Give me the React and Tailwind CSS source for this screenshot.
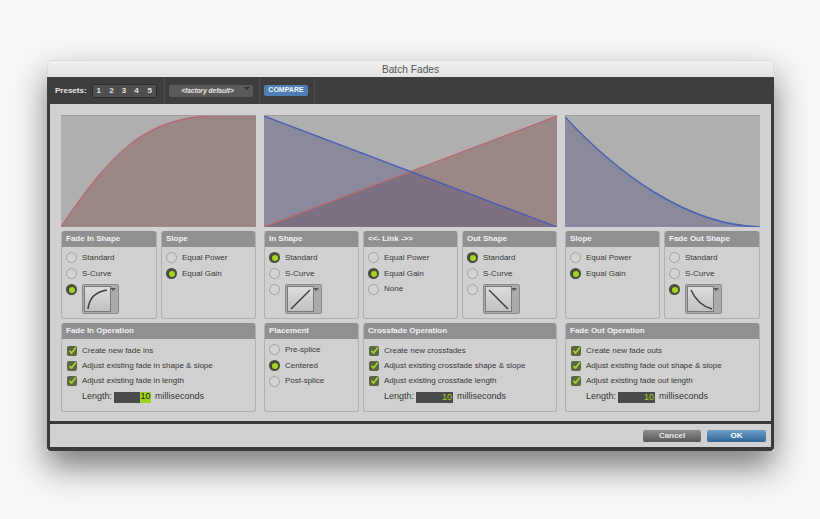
import React from 'react';

const font = { fontFamily: '"Liberation Sans", Arial, sans-serif' };

function Radio({ on }) {
  if (on) {
    return (
      <span className="flex h-[11px] w-[11px] shrink-0 items-center justify-center rounded-full bg-[#484c3e]">
        <span className="h-[6px] w-[6px] rounded-full bg-[#a6d41e]" />
      </span>
    );
  }
  return <span className="h-[11px] w-[11px] shrink-0 rounded-full border border-[#a2a2a2] bg-[#d4d4d4]" />;
}

function RadioRow({ label, on }) {
  return (
    <div className="flex h-[15.75px] items-center gap-[5px] text-[8px] text-[#383838]">
      <Radio on={on} />
      <span>{label}</span>
    </div>
  );
}

function Check({ label }) {
  return (
    <div className="flex h-[15px] items-center gap-[5px] text-[8px] text-[#383838]">
      <span className="flex h-[10px] w-[10px] shrink-0 items-center justify-center rounded-[2px] bg-[#5d6642]">
        <svg width="9" height="9" viewBox="0 0 9 9" fill="none">
          <path d="M1.5 4.8 L3.6 7 L7.8 1.6" stroke="#a9d82a" strokeWidth="1.7" />
        </svg>
      </span>
      <span>{label}</span>
    </div>
  );
}

function Panel({ title, className, children }) {
  return (
    <div className={`flex flex-col overflow-hidden rounded-[3px] border border-t-0 border-[#b0b0b0] bg-[#d0d0d0] ${className}`}>
      <div className="-mx-px flex h-[16px] shrink-0 items-center bg-[#909090] px-[5px] text-[8px] font-bold text-[#f2f2f2]">
        {title}
      </div>
      {children}
    </div>
  );
}

function CurveButton({ d }) {
  return (
    <div className="relative ml-[5px] h-[30px] w-[37px] shrink-0 rounded-[2px] border border-[#8a8a8a] bg-[#ababab]">
      <div className="ml-px mt-px h-[26px] w-[27px] border border-[#7a7a7a] bg-gradient-to-b from-[#dcdcdc] to-[#c2c2c2]">
        <svg width="25" height="24" viewBox="0 0 25 24" fill="none">
          <path d={d} stroke="#3f3f3f" strokeWidth="1.5" />
        </svg>
      </div>
      <span className="absolute right-[2px] top-[3px] h-0 w-0 border-x-[3px] border-t-[3px] border-x-transparent border-t-[#555555]" />
    </div>
  );
}

function ShapePanel({ title, selected, d, className }) {
  return (
    <Panel title={title} className={className}>
      <div className="px-[4px] pt-[3px]">
        <RadioRow label="Standard" on={selected === 'standard'} />
        <RadioRow label="S-Curve" on={selected === 'scurve'} />
        <div className="flex items-start pt-[2.5px]">
          <Radio on={selected === 'custom'} />
          <CurveButton d={d} />
        </div>
      </div>
    </Panel>
  );
}

function OptionsPanel({ title, options, selected, className }) {
  return (
    <Panel title={title} className={className}>
      <div className="px-[4px] pt-[3px]">
        {options.map((o) => (
          <RadioRow key={o} label={o} on={o === selected} />
        ))}
      </div>
    </Panel>
  );
}

function OperationPanel({ title, lines, boxed, className }) {
  return (
    <Panel title={title} className={className}>
      <div className="pl-[5px] pt-[4px]">
        {lines.map((l) => (
          <Check key={l} label={l} />
        ))}
        <div className="mt-[2px] flex h-[14px] items-center pl-[15px] text-[9px] text-[#383838]">
          <span className="mr-px w-[31px]">Length:</span>
          <span className="mr-[4px] flex h-[11px] w-[37px] justify-end bg-[#4b4b4b]">
            {boxed ? (
              <span className="flex h-[11px] w-[11px] items-center justify-center bg-[#9fd41c] text-[9px] text-[#222222]">10</span>
            ) : (
              <span className="pr-px text-[9px] leading-[11px] text-[#a6d41e]">10</span>
            )}
          </span>
          <span>milliseconds</span>
        </div>
      </div>
    </Panel>
  );
}

function Graph({ className, children, viewBox }) {
  return (
    <div className={`h-[112px] border-t border-[#9c9c9c] bg-[#afafaf] ${className}`}>
      <svg className="block h-full w-full" viewBox={viewBox} preserveAspectRatio="none">
        {children}
      </svg>
    </div>
  );
}

function ToolbarDivider() {
  return <div className="h-[27px] w-px bg-[#4d4d4d]" />;
}

export default function App() {
  const inCurve = 'M0 111 C45 45 80 1 150 0 L195 0';
  const outCurve = 'M0 1 C50 55 120 109 195 111';
  return (
    <div className="h-[519px] w-[820px] overflow-hidden bg-[#f7f7f7] pl-[47px] pt-[60px]" style={font}>
      <div className="h-[391px] w-[727px] rounded-t-[5px] shadow-[0_16px_32px_rgba(0,0,0,0.5)]">
        <div className="flex h-[17px] items-center justify-center rounded-t-[5px] border border-b-0 border-[#dcdcdc] bg-gradient-to-b from-[#f1f1f1] to-[#e2e2e2] pt-px text-[10.2px] text-[#555555]">
          Batch Fades
        </div>

        <div className="flex h-[27px] items-center bg-[#3e3e3e] text-white">
          <span className="ml-[8px] w-[37px] text-[8px] font-bold text-[#e8e8e8]">Presets:</span>
          <div className="flex h-[14px] w-[65px] items-center rounded-[2px] border border-[#2c2c2c] bg-[#505050]">
            {['1', '2', '3', '4', '5'].map((n) => (
              <span key={n} className="w-[12.6px] border-r border-[#484848] text-center text-[8px] font-bold text-[#e0e0e0] last:border-r-0">{n}</span>
            ))}
          </div>
          <div className="ml-[7px]"><ToolbarDivider /></div>
          <div className="relative ml-[4px] flex h-[12px] w-[84px] items-center justify-center rounded-[2px] bg-[#5a5a5a] pr-[7px] text-[6.5px] font-bold italic text-[#e8e8e8]">
            &lt;factory default&gt;
            <span className="absolute right-[3px] top-[2px] h-0 w-0 border-x-[3px] border-t-[3px] border-x-transparent border-t-[#2d2d2d]" />
          </div>
          <div className="ml-[6px]"><ToolbarDivider /></div>
          <div className="ml-[4px] flex h-[11px] w-[44px] items-center justify-center rounded-[2px] bg-[#4d7fb4] text-[7px] font-bold text-[#eef4fa]">
            COMPARE
          </div>
          <div className="ml-[6px]"><ToolbarDivider /></div>
        </div>

        <div className="h-[347px] rounded-b-[4px] bg-[#3a3a3a] px-[3px] pb-[3px]">
          <div className="h-[317px] bg-[#d1d1d1] px-[11px] pt-[11px]">
            <div className="flex gap-[8px]">
              <Graph className="w-[195px]" viewBox="0 0 195 111">
                <path d={`${inCurve} L195 111 Z`} fill="#9a8786" />
                <path d={inCurve} fill="none" stroke="#b96a6d" strokeWidth="1.3" />
              </Graph>
              <Graph className="w-[293px]" viewBox="0 0 293 111">
                <path d="M0 0 L293 111 L0 111 Z" fill="#8a8a9c" />
                <path d="M293 0 L293 111 L0 111 Z" fill="#9a8786" />
                <path d="M146.5 55.5 L293 111 L0 111 Z" fill="#7e7083" />
                <path d="M0 111 L293 0" stroke="#b96a6d" strokeWidth="1.2" />
                <path d="M0 0 L293 111" stroke="#4a5cb6" strokeWidth="1.3" />
              </Graph>
              <Graph className="w-[195px]" viewBox="0 0 195 111">
                <path d={`${outCurve} L195 111 L0 111 Z`} fill="#8a8a9c" />
                <path d={outCurve} fill="none" stroke="#4a62b8" strokeWidth="1.5" />
              </Graph>
            </div>

            <div className="mt-[4px] flex h-[88px] gap-[8px]">
              <div className="flex w-[195px] gap-[4px]">
                <ShapePanel className="w-[96px]" title="Fade In Shape" selected="custom" d="M3 22 C4 11 10 5 22 3" />
                <OptionsPanel className="w-[95px]" title="Slope" options={['Equal Power', 'Equal Gain']} selected="Equal Gain" />
              </div>
              <div className="flex w-[293px] gap-[4px]">
                <ShapePanel className="w-[95px]" title="In Shape" selected="standard" d="M3 22 L22 3" />
                <OptionsPanel className="w-[95px]" title="<<- Link ->>" options={['Equal Power', 'Equal Gain', 'None']} selected="Equal Gain" />
                <ShapePanel className="w-[95px]" title="Out Shape" selected="standard" d="M3 3 L22 22" />
              </div>
              <div className="flex w-[195px] gap-[4px]">
                <OptionsPanel className="w-[95px]" title="Slope" options={['Equal Power', 'Equal Gain']} selected="Equal Gain" />
                <ShapePanel className="w-[96px]" title="Fade Out Shape" selected="custom" d="M3 3 C7 12 13 19 24 22" />
              </div>
            </div>

            <div className="mt-[4px] flex h-[89px] gap-[8px]">
              <OperationPanel
                className="w-[195px]"
                title="Fade In Operation"
                lines={['Create new fade ins', 'Adjust existing fade in shape & slope', 'Adjust existing fade in length']}
                boxed
              />
              <div className="flex w-[293px] gap-[4px]">
                <OptionsPanel className="w-[95px]" title="Placement" options={['Pre-splice', 'Centered', 'Post-splice']} selected="Centered" />
                <OperationPanel
                  className="w-[194px]"
                  title="Crossfade Operation"
                  lines={['Create new crossfades', 'Adjust existing crossfade shape & slope', 'Adjust existing crossfade length']}
                />
              </div>
              <OperationPanel
                className="w-[195px]"
                title="Fade Out Operation"
                lines={['Create new fade outs', 'Adjust existing fade out shape & slope', 'Adjust existing fade out length']}
              />
            </div>
          </div>

          <div className="flex h-[26px] items-center justify-end gap-[6px] border-t-[3px] border-[#3a3a3a] bg-[#d1d1d1] pr-[5px]">
            <div className="flex h-[12px] w-[58px] items-center justify-center rounded-[2px] bg-gradient-to-b from-[#8f8f8f] to-[#585858] text-[8px] font-bold text-[#e8e8e8]">
              Cancel
            </div>
            <div className="flex h-[12px] w-[59px] items-center justify-center rounded-[2px] bg-gradient-to-b from-[#6f9fc8] to-[#2f6797] text-[8px] font-bold text-white">
              OK
            </div>
          </div>
        </div>
      </div>
    </div>
  );
}
